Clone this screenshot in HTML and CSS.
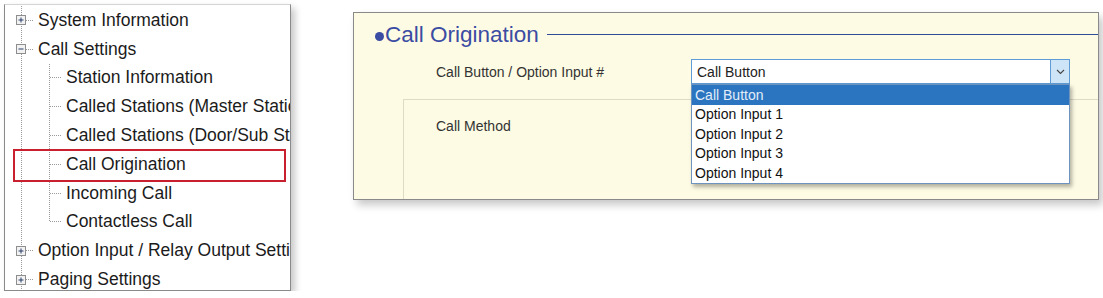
FILE: index.html
```html
<!DOCTYPE html>
<html lang="en">
<head>
  <meta charset="UTF-8">
  <title>Call Origination</title>
  <link rel="stylesheet" href="styles.css">
</head>
<body>
  <div class="page">
    <div class="tree-panel">
      <ul class="tree">
        <li class="row">
          <span class="toggle"><svg width="10" height="10" viewBox="0 0 10 10"><rect x="0.5" y="0.5" width="9" height="9" fill="#f2f2f2" stroke="#8e8e8e"/><path d="M2.5 5h5M5 2.5v5" stroke="#2b3f6b"/></svg></span>
          <span class="hline"></span>
          <span class="label">System Information</span>
        </li>
        <li class="row">
          <span class="toggle"><svg width="10" height="10" viewBox="0 0 10 10"><rect x="0.5" y="0.5" width="9" height="9" fill="#f2f2f2" stroke="#8e8e8e"/><path d="M2.5 5h5" stroke="#2b3f6b"/></svg></span>
          <span class="hline"></span>
          <span class="label">Call Settings</span>
        </li>
        <li>
          <ul class="children">
            <li class="row child"><span class="hline"></span><span class="label">Station Information</span></li>
            <li class="row child"><span class="hline"></span><span class="label">Called Stations (Master Stations)</span></li>
            <li class="row child"><span class="hline"></span><span class="label">Called Stations (Door/Sub Stations)</span></li>
            <li class="row child current"><span class="hline"></span><span class="label">Call Origination</span></li>
            <li class="row child"><span class="hline"></span><span class="label">Incoming Call</span></li>
            <li class="row child"><span class="hline"></span><span class="label">Contactless Call</span></li>
          </ul>
        </li>
        <li class="row">
          <span class="toggle"><svg width="10" height="10" viewBox="0 0 10 10"><rect x="0.5" y="0.5" width="9" height="9" fill="#f2f2f2" stroke="#8e8e8e"/><path d="M2.5 5h5M5 2.5v5" stroke="#2b3f6b"/></svg></span>
          <span class="hline"></span>
          <span class="label">Option Input / Relay Output Settings</span>
        </li>
        <li class="row">
          <span class="toggle"><svg width="10" height="10" viewBox="0 0 10 10"><rect x="0.5" y="0.5" width="9" height="9" fill="#f2f2f2" stroke="#8e8e8e"/><path d="M2.5 5h5M5 2.5v5" stroke="#2b3f6b"/></svg></span>
          <span class="hline"></span>
          <span class="label">Paging Settings</span>
        </li>
      </ul>
    </div>

    <div class="settings-panel">
      <h2 class="section-title"><span class="dot"></span>Call Origination<span class="rule"></span></h2>
      <div class="field-row">
        <label class="field-label">Call Button / Option Input #</label>
        <div class="select">
          <span class="select-value">Call Button</span>
          <span class="select-arrow"><svg width="9" height="6" viewBox="0 0 9 6"><path d="M1 1l3.5 3.5L8 1" fill="none" stroke="#444" stroke-width="1.1"/></svg></span>
          <ul class="options">
            <li class="selected">Call Button</li>
            <li>Option Input 1</li>
            <li>Option Input 2</li>
            <li>Option Input 3</li>
            <li>Option Input 4</li>
          </ul>
        </div>
      </div>
      <div class="group">
        <label class="field-label">Call Method</label>
      </div>
    </div>
  </div>
</body>
</html>
```

FILE: styles.css
```css
body {
  margin: 0;
  background-color: #ffffff;
  font-family: "Liberation Sans", Arial, sans-serif;
}
ul {
  list-style: none;
  margin: 0;
  padding: 0;
}
.page {
  display: flex;
  align-items: flex-start;
}

/* tree */
.tree-panel {
  box-sizing: border-box;
  width: 287px;
  height: 287px;
  margin: 4px 0 0 4px;
  padding-top: 1px;
  background-color: #fff;
  border: 1px solid #8a8a8a;
  border-top-color: #d4d4d4;
  box-shadow: 4px 4px 7px rgba(0, 0, 0, 0.22);
  overflow: hidden;
}
.tree {
  background-image: repeating-linear-gradient(to bottom, #9a9a9a 0 1px, transparent 1px 2px);
  background-size: 1px 100%;
  background-position: 16px 0;
  background-repeat: no-repeat;
}
.row {
  display: flex;
  align-items: center;
  height: 28.8px;
  font-size: 17.5px;
  color: #1b1b1b;
  white-space: nowrap;
  position: relative;
}
.toggle {
  display: flex;
  flex-shrink: 0;
  margin-left: 11px;
  width: 10px;
  background-color: #fff;
}
.hline {
  flex-shrink: 0;
  width: 7px;
  height: 1px;
  background-image: repeating-linear-gradient(to right, #9a9a9a 0 1px, transparent 1px 2px);
  margin-right: 5px;
}
.children {
  background-image: repeating-linear-gradient(to bottom, #9a9a9a 0 1px, transparent 1px 2px);
  background-size: 1px calc(100% - 14px);
  background-position: 44px 0;
  background-repeat: no-repeat;
}
.child .hline {
  margin-left: 45px;
  width: 12px;
  margin-right: 4px;
}
.current::after {
  content: "";
  position: absolute;
  left: 8px;
  top: -1px;
  width: 273px;
  height: 33px;
  box-sizing: border-box;
  border: 2px solid #c8202f;
}

/* settings */
.settings-panel {
  box-sizing: border-box;
  width: 746px;
  height: 188px;
  margin: 12px 0 0 62px;
  padding: 9px 0 0 21px;
  background-color: #fdfbe3;
  border: 1px solid #8a8a8a;
  box-shadow: 4px 5px 8px rgba(0, 0, 0, 0.22);
  display: flex;
  flex-direction: column;
}
.section-title {
  display: flex;
  align-items: center;
  margin: 0;
  height: 26px;
  font-size: 22.5px;
  font-weight: normal;
  color: #3b4ca3;
}
.dot {
  width: 9px;
  height: 9px;
  border-radius: 50%;
  background-color: #3b4ca3;
  margin-right: 1px;
  margin-top: 2px;
}
.rule {
  flex: 1;
  border-top: 1px solid #2f4d96;
  margin-left: 8px;
  margin-top: -1px;
}
.field-row {
  display: flex;
  align-items: center;
  margin: 11px 0 0 61px;
}
.field-label {
  width: 255px;
  font-size: 14px;
  color: #333;
}
.select {
  position: relative;
  box-sizing: border-box;
  width: 379px;
  height: 25px;
  display: flex;
  align-items: center;
  background-color: #fff;
  border: 1px solid #5f9bd4;
}
.select-value {
  flex: 1;
  padding-left: 5px;
  font-size: 14px;
  color: #222;
}
.select-arrow {
  display: flex;
  align-items: center;
  justify-content: center;
  width: 18px;
  height: 100%;
  background-color: #cde5f7;
  border-left: 1px solid #5f9bd4;
}
.options {
  position: absolute;
  top: 24px;
  left: -1px;
  width: 379px;
  box-sizing: border-box;
  background-color: #fff;
  border: 1px solid #6f93bf;
  box-shadow: 2px 3px 4px rgba(0, 0, 0, 0.3);
  z-index: 2;
}
.options li {
  height: 19.5px;
  line-height: 19.5px;
  padding-left: 3px;
  font-size: 14px;
  color: #111;
}
.options .selected {
  height: 20px;
  line-height: 20px;
  background-color: #2b75c0;
  color: #e2edf9;
}
.group {
  flex: 1;
  margin: 15px 0 0 28px;
  padding: 17px 0 0 32px;
  border-top: 1px solid #dddbc6;
  border-left: 1px solid #dddbc6;
}
```
